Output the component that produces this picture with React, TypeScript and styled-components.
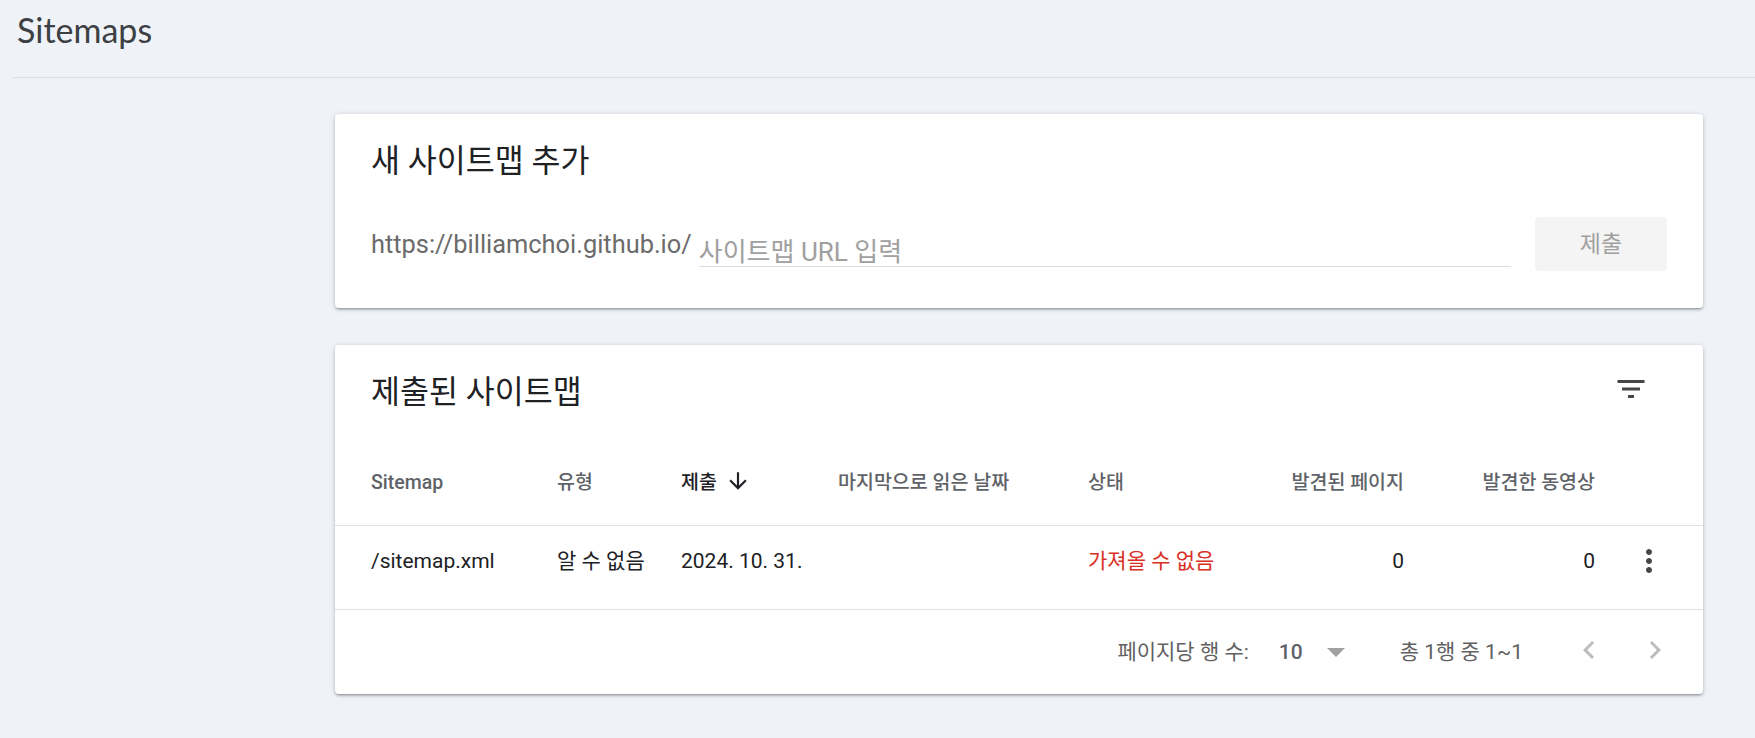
import React from "react";
import styled, { createGlobalStyle } from "styled-components";

const GlobalStyle = createGlobalStyle`
  html, body { margin: 0; padding: 0; }
  body {
    background: #eff3f8;
    font-family: Roboto, "Noto Sans CJK KR", sans-serif;
    -webkit-font-smoothing: antialiased;
  }
  * { box-sizing: border-box; }
`;

const Page = styled.div`
  min-height: 100vh;
  background: #eff3f8;
`;

const TopBar = styled.header`
  margin-left: 12px;
  padding: 10px 0 27px 5px;
  border-bottom: 1px solid #dde1e6;
`;

const PageTitle = styled.h1`
  margin: 0;
  font-family: Lato, "Noto Sans", sans-serif;
  font-weight: 400;
  font-size: 34px;
  line-height: 40px;
  color: #3c4043;
`;

const Main = styled.main`
  display: flex;
  flex-direction: column;
  gap: 37px;
  padding: 36px 52px 40px 335px;
`;

const Card = styled.section`
  background: #fff;
  border-radius: 4px;
  box-shadow: 0 2px 2px 0 rgba(0, 0, 0, 0.14), 0 3px 1px -2px rgba(0, 0, 0, 0.12),
    0 1px 5px 0 rgba(0, 0, 0, 0.2);
`;

const CardTitleBar = styled.div`
  height: 96px;
  display: flex;
  align-items: center;
  justify-content: space-between;
  padding: 0 36px;
`;

const CardTitle = styled.h2`
  margin: 0;
  font-size: 31.5px;
  line-height: 34px;
  font-weight: 400;
  color: #202124;
`;

const IconButton = styled.button`
  width: 72px;
  height: 72px;
  margin-bottom: 8px;
  display: flex;
  align-items: center;
  justify-content: center;
  border: 0;
  padding: 0;
  background: transparent;
  color: #444746;
  cursor: pointer;
`;

const UrlRow = styled.div`
  display: flex;
  align-items: center;
  height: 54px;
  margin: 7px 36px 37px;
`;

const UrlPrefix = styled.span`
  font-size: 25.4px;
  line-height: 28px;
  color: #6b6b6b;
  white-space: nowrap;
`;

const UrlField = styled.label`
  flex: 1;
  align-self: flex-end;
  display: flex;
  margin: 0 24px 4px 7px;
  border-bottom: 1px solid #dadce0;
`;

const UrlInput = styled.input`
  flex: 1;
  border: 0;
  outline: none;
  padding: 0;
  background: transparent;
  font-family: Roboto, "Noto Sans CJK KR", sans-serif;
  font-size: 26px;
  line-height: 28px;
  height: 28px;
  color: #202124;
  &::placeholder {
    color: #a0a0a0;
  }
`;

const SubmitButton = styled.button`
  width: 132px;
  height: 54px;
  flex: none;
  border: 0;
  border-radius: 4px;
  background: #f4f4f4;
  color: #a0a0a0;
  font-family: Roboto, "Noto Sans CJK KR", sans-serif;
  font-size: 23px;
  line-height: 1;
`;

const columns = "186px 124px 157px 250px 162px 154px 191px 72px";

const HeadRow = styled.div`
  display: grid;
  grid-template-columns: ${columns};
  align-items: center;
  height: 85px;
  padding: 0 36px;
  border-bottom: 1px solid #e0e0e0;
`;

const HeadCell = styled.div<{ $align?: "left" | "right"; $active?: boolean }>`
  display: flex;
  align-items: center;
  justify-content: ${(p) => (p.$align === "right" ? "flex-end" : "flex-start")};
  font-size: 19.5px;
  line-height: 26px;
  font-weight: 500;
  color: ${(p) => (p.$active ? "#202124" : "#5f6368")};
  white-space: nowrap;
`;

const SortIcon = styled.svg`
  width: 26px;
  height: 26px;
  margin-left: 8px;
  margin-top: -5px;
  fill: #202124;
`;

const BodyRow = styled.div`
  display: grid;
  grid-template-columns: ${columns};
  align-items: center;
  height: 84px;
  padding: 0 36px 14px;
  border-bottom: 1px solid #e0e0e0;
`;

const BodyCell = styled.div<{ $align?: "left" | "right"; $tone?: "error" }>`
  display: flex;
  align-items: center;
  justify-content: ${(p) => (p.$align === "right" ? "flex-end" : "flex-start")};
  font-size: 21px;
  line-height: 30px;
  color: ${(p) => (p.$tone === "error" ? "#d93025" : "#202124")};
  white-space: nowrap;
`;

const MoreIcon = styled.svg`
  width: 36px;
  height: 36px;
  fill: #444746;
`;

const Footer = styled.div`
  height: 84px;
  display: flex;
  align-items: center;
  justify-content: flex-end;
  padding-right: 30px;
  font-size: 21px;
  line-height: 26px;
  color: #616161;
`;

const RowsLabel = styled.span`
  margin-right: 30px;
`;

const RowsValue = styled.span`
  color: #5f6368;
  font-weight: 500;
`;

const DropTriangle = styled.svg`
  width: 18px;
  height: 9px;
  margin-left: 24px;
  fill: #a0a0a0;
`;

const RangeText = styled.span`
  margin-left: 55px;
`;

const PagerButton = styled.button<{ $gap: number }>`
  width: 36px;
  height: 36px;
  margin-left: ${(p) => p.$gap}px;
  margin-top: -4px;
  padding: 0;
  border: 0;
  background: transparent;
  display: flex;
  align-items: center;
  justify-content: center;
  fill: #bdbdbd;
`;

const Chevron = styled.svg`
  width: 36px;
  height: 36px;
`;

const FilterIcon = () => (
  <svg width="36" height="36" viewBox="0 0 24 24" fill="currentColor">
    <path d="M10 18h4v-2h-4v2zM3 6v2h18V6H3zm3 7h12v-2H6v2z" />
  </svg>
);

type Sitemap = {
  path: string;
  type: string;
  submitted: string;
  lastRead: string;
  status: string;
  pages: number;
  videos: number;
};

const rows: Sitemap[] = [
  {
    path: "/sitemap.xml",
    type: "알 수 없음",
    submitted: "2024. 10. 31.",
    lastRead: "",
    status: "가져올 수 없음",
    pages: 0,
    videos: 0,
  },
];

export default function App() {
  return (
    <Page>
      <GlobalStyle />
      <TopBar>
        <PageTitle>Sitemaps</PageTitle>
      </TopBar>
      <Main>
        <Card>
          <CardTitleBar>
            <CardTitle>새 사이트맵 추가</CardTitle>
          </CardTitleBar>
          <UrlRow>
            <UrlPrefix>https://billiamchoi.github.io/</UrlPrefix>
            <UrlField>
              <UrlInput placeholder="사이트맵 URL 입력" />
            </UrlField>
            <SubmitButton disabled>제출</SubmitButton>
          </UrlRow>
        </Card>

        <Card>
          <CardTitleBar>
            <CardTitle>제출된 사이트맵</CardTitle>
            <IconButton aria-label="필터">
              <FilterIcon />
            </IconButton>
          </CardTitleBar>
          <HeadRow>
            <HeadCell>Sitemap</HeadCell>
            <HeadCell>유형</HeadCell>
            <HeadCell $active>
              제출
              <SortIcon viewBox="0 0 24 24">
                <path d="M20 12l-1.41-1.41L13 16.17V4h-2v12.17l-5.58-5.59L4 12l8 8 8-8z" />
              </SortIcon>
            </HeadCell>
            <HeadCell>마지막으로 읽은 날짜</HeadCell>
            <HeadCell>상태</HeadCell>
            <HeadCell $align="right">발견된 페이지</HeadCell>
            <HeadCell $align="right">발견한 동영상</HeadCell>
            <HeadCell />
          </HeadRow>
          {rows.map((r) => (
            <BodyRow key={r.path}>
              <BodyCell>{r.path}</BodyCell>
              <BodyCell>{r.type}</BodyCell>
              <BodyCell>{r.submitted}</BodyCell>
              <BodyCell>{r.lastRead}</BodyCell>
              <BodyCell $tone="error">{r.status}</BodyCell>
              <BodyCell $align="right">{r.pages}</BodyCell>
              <BodyCell $align="right">{r.videos}</BodyCell>
              <BodyCell $align="right">
                <MoreIcon viewBox="0 0 24 24">
                  <path d="M12 8c1.1 0 2-.9 2-2s-.9-2-2-2-2 .9-2 2 .9 2 2 2zm0 2c-1.1 0-2 .9-2 2s.9 2 2 2 2-.9 2-2-.9-2-2-2zm0 6c-1.1 0-2 .9-2 2s.9 2 2 2 2-.9 2-2-.9-2-2-2z" />
                </MoreIcon>
              </BodyCell>
            </BodyRow>
          ))}
          <Footer>
            <RowsLabel>페이지당 행 수:</RowsLabel>
            <RowsValue>10</RowsValue>
            <DropTriangle viewBox="0 0 10 5">
              <path d="M0 0l5 5 5-5z" />
            </DropTriangle>
            <RangeText>총 1행 중 1~1</RangeText>
            <PagerButton $gap={48} disabled aria-label="이전">
              <Chevron viewBox="0 0 24 24">
                <path d="M15.41 7.41L14 6l-6 6 6 6 1.41-1.41L10.83 12z" />
              </Chevron>
            </PagerButton>
            <PagerButton $gap={30} disabled aria-label="다음">
              <Chevron viewBox="0 0 24 24">
                <path d="M10 6L8.59 7.41 13.17 12l-4.58 4.59L10 18l6-6z" />
              </Chevron>
            </PagerButton>
          </Footer>
        </Card>
      </Main>
    </Page>
  );
}
